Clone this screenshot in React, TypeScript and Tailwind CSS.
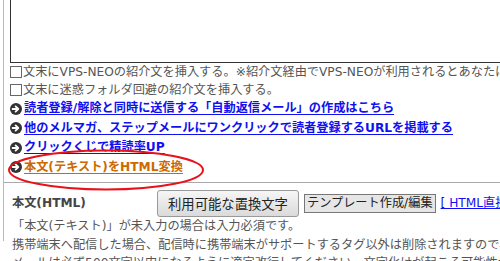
import React from 'react';

const ArrowIcon = () => (
  <svg width="12" height="12" viewBox="0 0 12 12" className="shrink-0">
    <circle cx="6" cy="6" r="6" fill="#333" />
    <path d="M2.6 6h5M5.6 3.4 8.3 6 5.6 8.6" stroke="#fff" strokeWidth="1.8" fill="none" strokeLinecap="round" strokeLinejoin="round" />
  </svg>
);

const links = [
  { text: '読者登録/解除と同時に送信する「自動返信メール」の作成はこちら', color: 'text-[#1010f0] decoration-[#1010f0]' },
  { text: '他のメルマガ、ステップメールにワンクリックで読者登録するURLを掲載する', color: 'text-[#1010f0] decoration-[#1010f0]' },
  { text: 'クリックくじで精読率UP', color: 'text-[#1010f0] decoration-[#1010f0]' },
  { text: '本文(テキスト)をHTML変換', color: 'text-[#cc6a00] decoration-[#cc6a00]' },
];

const App: React.FC = () => {
  return (
    <div className="w-[500px] h-[261px] overflow-hidden bg-white text-[12.2px] text-[#555] font-['DejaVu_Sans','Noto_Sans_CJK_JP',sans-serif]">
      <div className="ml-[3px] h-full border-l border-[#b8b8b8]">
        <div className="pl-[6px] pb-[5px]">
          <div className="-mt-[20px] h-[83px] w-[520px] border border-[#333] bg-white" />
          <div className="leading-[18px] whitespace-nowrap">
            <div className="flex items-center">
              <span className="shrink-0 inline-block w-[12px] h-[12px] border border-[#666] bg-white mr-px" />
              <span>文末にVPS-NEOの紹介文を挿入する。※紹介文経由でVPS-NEOが利用されるとあなたに報酬が発生します。</span>
            </div>
            <div className="flex items-center">
              <span className="shrink-0 inline-block w-[12px] h-[12px] border border-[#666] bg-white mr-px" />
              <span>文末に迷惑フォルダ回避の紹介文を挿入する。</span>
            </div>
          </div>
          <div className="relative leading-[19.5px] whitespace-nowrap font-bold">
            {links.map((l) => (
              <div key={l.text} className="flex items-center gap-[2px]">
                <ArrowIcon />
                <a href="#" className={`underline underline-offset-2 ${l.color}`}>
                  {l.text}
                </a>
              </div>
            ))}
            <svg className="absolute left-[-2px] top-[50px] pointer-events-none" width="198" height="42" viewBox="0 0 198 42">
              <ellipse cx="98" cy="21" rx="97" ry="19.5" fill="none" stroke="#e8121b" strokeWidth="2" />
            </svg>
          </div>
        </div>
        <div className="border-t border-[#aaa] pl-[8px] whitespace-nowrap">
          <div className="flex items-center pt-[7px]">
            <div className="shrink-0 w-[145px] font-bold text-[#444]">本文(HTML)</div>
            <button className="shrink-0 h-[27px] px-[10px] rounded-[3px] border border-[#999] bg-gradient-to-b from-[#f6f6f6] to-[#dadada] text-[#222] text-[13.33px] font-['Noto_Sans_CJK_JP',sans-serif]">
              利用可能な置換文字
            </button>
            <button className="shrink-0 ml-[5px] h-[19px] px-[2px] border border-[#777] bg-[#e6e6e6] text-[#222] text-[12.2px] leading-[17px]">
              テンプレート作成/編集
            </button>
            <a href="#" className="shrink-0 ml-[5px] text-[#1010f0] underline">
              [ HTML直接編集 ]
            </a>
          </div>
          <div className="leading-[18.5px]">
            <div>「本文(テキスト)」が未入力の場合は入力必須です。</div>
            <div>携帯端末へ配信した場合、配信時に携帯端末がサポートするタグ以外は削除されますので、ご注意ください。</div>
            <div>メールは必ず500文字以内になるように適宜改行してください。文字化けが起こる可能性があります。</div>
          </div>
        </div>
      </div>
    </div>
  );
};

export default App;
